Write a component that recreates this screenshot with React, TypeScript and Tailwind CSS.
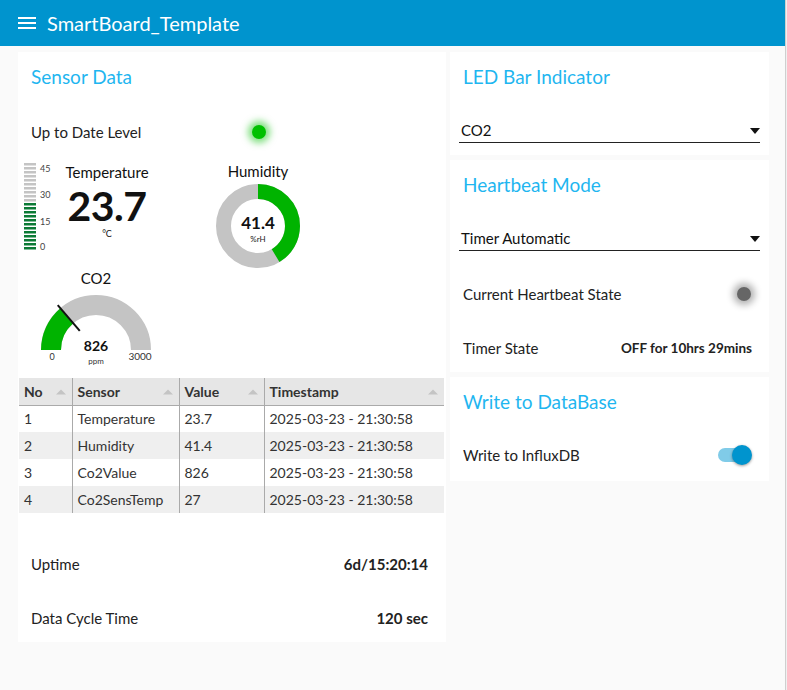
import React from 'react';

const FONT = "font-['Lato','Liberation_Sans',sans-serif]";

const rows = [
    { no: 1, sensor: 'Temperature', value: '23.7', ts: '2025-03-23 - 21:30:58' },
    { no: 2, sensor: 'Humidity', value: '41.4', ts: '2025-03-23 - 21:30:58' },
    { no: 3, sensor: 'Co2Value', value: '826', ts: '2025-03-23 - 21:30:58' },
    { no: 4, sensor: 'Co2SensTemp', value: '27', ts: '2025-03-23 - 21:30:58' },
];

const Card = ({ className = '', children }: { className?: string; children: React.ReactNode }) => (
    <div className={`bg-white ${className}`}>{children}</div>
);

const Title = ({ children }: { children: React.ReactNode }) => (
    <div className="h-[50px] shrink-0 flex items-center px-[13px] text-[19px] text-[#1fb6f0]">{children}</div>
);

const Led = ({ color, glow }: { color: string; glow: string }) => (
    <span className={`block w-[14px] h-[14px] rounded-full ${color} ${glow}`} />
);

const SortIcon = () => (
    <svg width="12" height="7" viewBox="0 0 12 7"><path d="M1 6.5 6 1.5 11 6.5Z" fill="#c4c4c4" /></svg>
);

// level bar at the left of the temperature
const LevelBar = () => {
    const segs = Array.from({ length: 22 }, (_, i) => i);
    return (
        <svg width="40" height="96" viewBox="0 0 40 96" className="shrink-0">
            {segs.map((i) => (
                <rect key={i} x="2" y={86 - i * 4} width="12" height="2.5" fill={i < 12 ? '#0b7a35' : '#c4c4c4'} />
            ))}
            <text x="18" y="11" fontSize="9" fill="#444">45</text>
            <text x="18" y="37" fontSize="9" fill="#444">30</text>
            <text x="18" y="64" fontSize="9" fill="#444">15</text>
            <text x="18" y="89" fontSize="9" fill="#444">0</text>
        </svg>
    );
};

const Donut = () => {
    const r = 34.5;
    const c = 2 * Math.PI * r;
    const frac = 41.4 / 100;
    return (
        <svg width="90" height="90" viewBox="0 0 90 90">
            <circle cx="45" cy="45" r={r} fill="none" stroke="#c4c4c4" strokeWidth="15" />
            <circle
                cx="45" cy="45" r={r} fill="none" stroke="#00b300" strokeWidth="15"
                strokeDasharray={`${c * frac} ${c}`} transform="rotate(-90 45 45)"
            />
            <text x="45" y="48" textAnchor="middle" fontSize="17" fontWeight="700" fill="#111">41.4</text>
            <text x="45" y="61" textAnchor="middle" fontSize="8" fill="#222">%rH</text>
        </svg>
    );
};

const Co2Gauge = () => {
    const cx = 60, cy = 62, r = 45;
    const frac = 826 / 3000;
    const a = Math.PI * frac;
    const ex = cx - r * Math.cos(a), ey = cy - r * Math.sin(a);
    const n1 = [cx - 25 * Math.cos(a), cy - 25 * Math.sin(a)];
    const n2 = [cx - 59 * Math.cos(a), cy - 59 * Math.sin(a)];
    return (
        <svg width="120" height="82" viewBox="0 0 120 82">
            <path d={`M${cx - r} ${cy} A${r} ${r} 0 0 1 ${cx + r} ${cy}`} fill="none" stroke="#c4c4c4" strokeWidth="20" />
            <path d={`M${cx - r} ${cy} A${r} ${r} 0 0 1 ${ex} ${ey}`} fill="none" stroke="#00b300" strokeWidth="20" />
            <line x1={n1[0]} y1={n1[1]} x2={n2[0]} y2={n2[1]} stroke="#111" strokeWidth="2" />
            <text x={cx} y={cy + 1} textAnchor="middle" fontSize="14" fontWeight="700" fill="#111">826</text>
            <text x={cx} y={cy + 14} textAnchor="middle" fontSize="8" fill="#333">ppm</text>
            <text x={cx - 44} y={cy + 10} textAnchor="middle" fontSize="9" fill="#333">0</text>
            <text x={cx + 44} y={cy + 10} textAnchor="middle" fontSize="10" fill="#333">3000</text>
        </svg>
    );
};

const Select = ({ value }: { value: string }) => (
    <div className="mx-[9px] h-[24px] flex items-center justify-between border-b border-[#222] pl-[2px] pr-0 text-[15px] text-[#111]">
        <span>{value}</span>
        <svg width="10" height="6" viewBox="0 0 10 6"><path d="M0 0h10L5 6Z" fill="#111" /></svg>
    </div>
);

const Row = ({ label, children, className = '' }: { label: string; children?: React.ReactNode; className?: string }) => (
    <div className={`shrink-0 flex items-center justify-between px-[13px] text-[15px] text-[#222] ${className}`}>
        <span>{label}</span>
        {children}
    </div>
);

export default function App() {
    return (
        <div className={`flex w-[787px] h-[690px] overflow-hidden bg-[#fafafa] ${FONT}`}>
            <div className="w-[785px] shrink-0 flex flex-col">
                <header className="h-[46px] shrink-0 bg-[#0094ce] flex items-center pl-[18px] gap-[11px] text-white">
                    <svg width="18" height="14" viewBox="0 0 18 14">
                        <rect y="1" width="18" height="2" fill="#fff" />
                        <rect y="6" width="18" height="2" fill="#fff" />
                        <rect y="11" width="18" height="2" fill="#fff" />
                    </svg>
                    <span className="text-[20px]">SmartBoard_Template</span>
                </header>

                <div className="flex gap-[4px] pl-[18px] pt-[6px]">
                    {/* left column */}
                    <Card className="w-[428px] h-[590px] flex flex-col">
                        <Title>Sensor Data</Title>
                        <div className="h-[60px] shrink-0 flex items-center pl-[13px] text-[15px] text-[#222]">
                            <span className="w-[221px]">Up to Date Level</span>
                            <Led color="bg-[#00c000]" glow="shadow-[0_0_7px_4px_rgba(0,192,0,0.5)]" />
                        </div>
                        <div className="flex items-start h-[107px] shrink-0 -mt-[1px]">
                            <div className="pl-[4px]"><LevelBar /></div>
                            <div className="w-[90px] flex flex-col items-center text-[#111]">
                                <span className="text-[15px] leading-[20px] mt-[1px]">Temperature</span>
                                <span className="text-[41px] font-bold leading-[40px] mt-[4px] tracking-[-0.5px]">23.7</span>
                                <span className="text-[9px] leading-[10px] mt-[3px]">°C</span>
                            </div>
                            <div className="w-[110px] flex flex-col items-center ml-[51px]">
                                <span className="text-[15px] leading-[20px] text-[#111]">Humidity</span>
                                <Donut />
                            </div>
                        </div>
                        <div className="h-[110px] shrink-0 flex flex-col items-start pl-[18px]">
                            <div className="w-[120px] flex flex-col items-center">
                                <span className="text-[15px] leading-[20px] text-[#111]">CO2</span>
                                <Co2Gauge />
                            </div>
                        </div>

                        <table className="mx-[1px] shrink-0 w-[425px] border-collapse text-[14px] text-[#333] table-fixed">
                            <colgroup>
                                <col className="w-[53px]" />
                                <col className="w-[107px]" />
                                <col className="w-[85px]" />
                                <col />
                            </colgroup>
                            <thead>
                                <tr className="bg-[#e6e6e6] h-[27px] border-b border-[#aaa]">
                                    {['No', 'Sensor', 'Value', 'Timestamp'].map((h, i) => (
                                        <th key={h} className={`px-[5px] text-left font-bold ${i > 0 ? 'border-l border-[#aaa]' : ''}`}>
                                            <div className="flex items-center justify-between">
                                                <span>{h}</span>
                                                <SortIcon />
                                            </div>
                                        </th>
                                    ))}
                                </tr>
                            </thead>
                            <tbody>
                                {rows.map((r, i) => (
                                    <tr key={r.no} className={`h-[27px] ${i % 2 ? 'bg-[#efefef]' : 'bg-white'}`}>
                                        <td className="px-[5px]">{r.no}</td>
                                        <td className="px-[5px] border-l border-[#aaa]">{r.sensor}</td>
                                        <td className="px-[5px] border-l border-[#aaa]">{r.value}</td>
                                        <td className="px-[5px] border-l border-[#aaa]">{r.ts}</td>
                                    </tr>
                                ))}
                            </tbody>
                        </table>

                        <Row label="Uptime" className="h-[54px] mt-[24px] pr-[18px]">
                            <span className="font-bold text-[15px]">6d/15:20:14</span>
                        </Row>
                        <Row label="Data Cycle Time" className="h-[54px] pr-[18px]">
                            <span className="font-bold text-[15px]">120 sec</span>
                        </Row>
                    </Card>

                    {/* right column */}
                    <div className="w-[319px] flex flex-col gap-[5px]">
                        <Card className="h-[103px]">
                            <Title>LED Bar Indicator</Title>
                            <div className="pt-[17px]"><Select value="CO2" /></div>
                        </Card>
                        <Card className="h-[212px]">
                            <Title>Heartbeat Mode</Title>
                            <div className="pt-[17px]"><Select value="Timer Automatic" /></div>
                            <Row label="Current Heartbeat State" className="h-[54px] mt-[16px] pr-[18px]">
                                <Led color="bg-[#666]" glow="shadow-[0_0_7px_4px_rgba(0,0,0,0.3)]" />
                            </Row>
                            <Row label="Timer State" className="h-[54px] pr-[17px]">
                                <span className="font-bold text-[13.5px]">OFF for 10hrs 29mins</span>
                            </Row>
                        </Card>
                        <Card className="h-[104px]">
                            <Title>Write to DataBase</Title>
                            <Row label="Write to InfluxDB" className="h-[54px] mt-[1px] pr-[17px]">
                                <div className="relative w-[34px] h-[20px] flex items-center">
                                    <div className="w-[32px] h-[14px] rounded-full bg-[#80cbe8]" />
                                    <div className="absolute right-0 w-[20px] h-[20px] rounded-full bg-[#0094ce] shadow-[0_1px_3px_rgba(0,0,0,0.4)]" />
                                </div>
                            </Row>
                        </Card>
                    </div>
                </div>
            </div>
            <div className="flex-1 border-l border-[#cfcfcf] bg-[#f0f0f0]" />
        </div>
    );
}
